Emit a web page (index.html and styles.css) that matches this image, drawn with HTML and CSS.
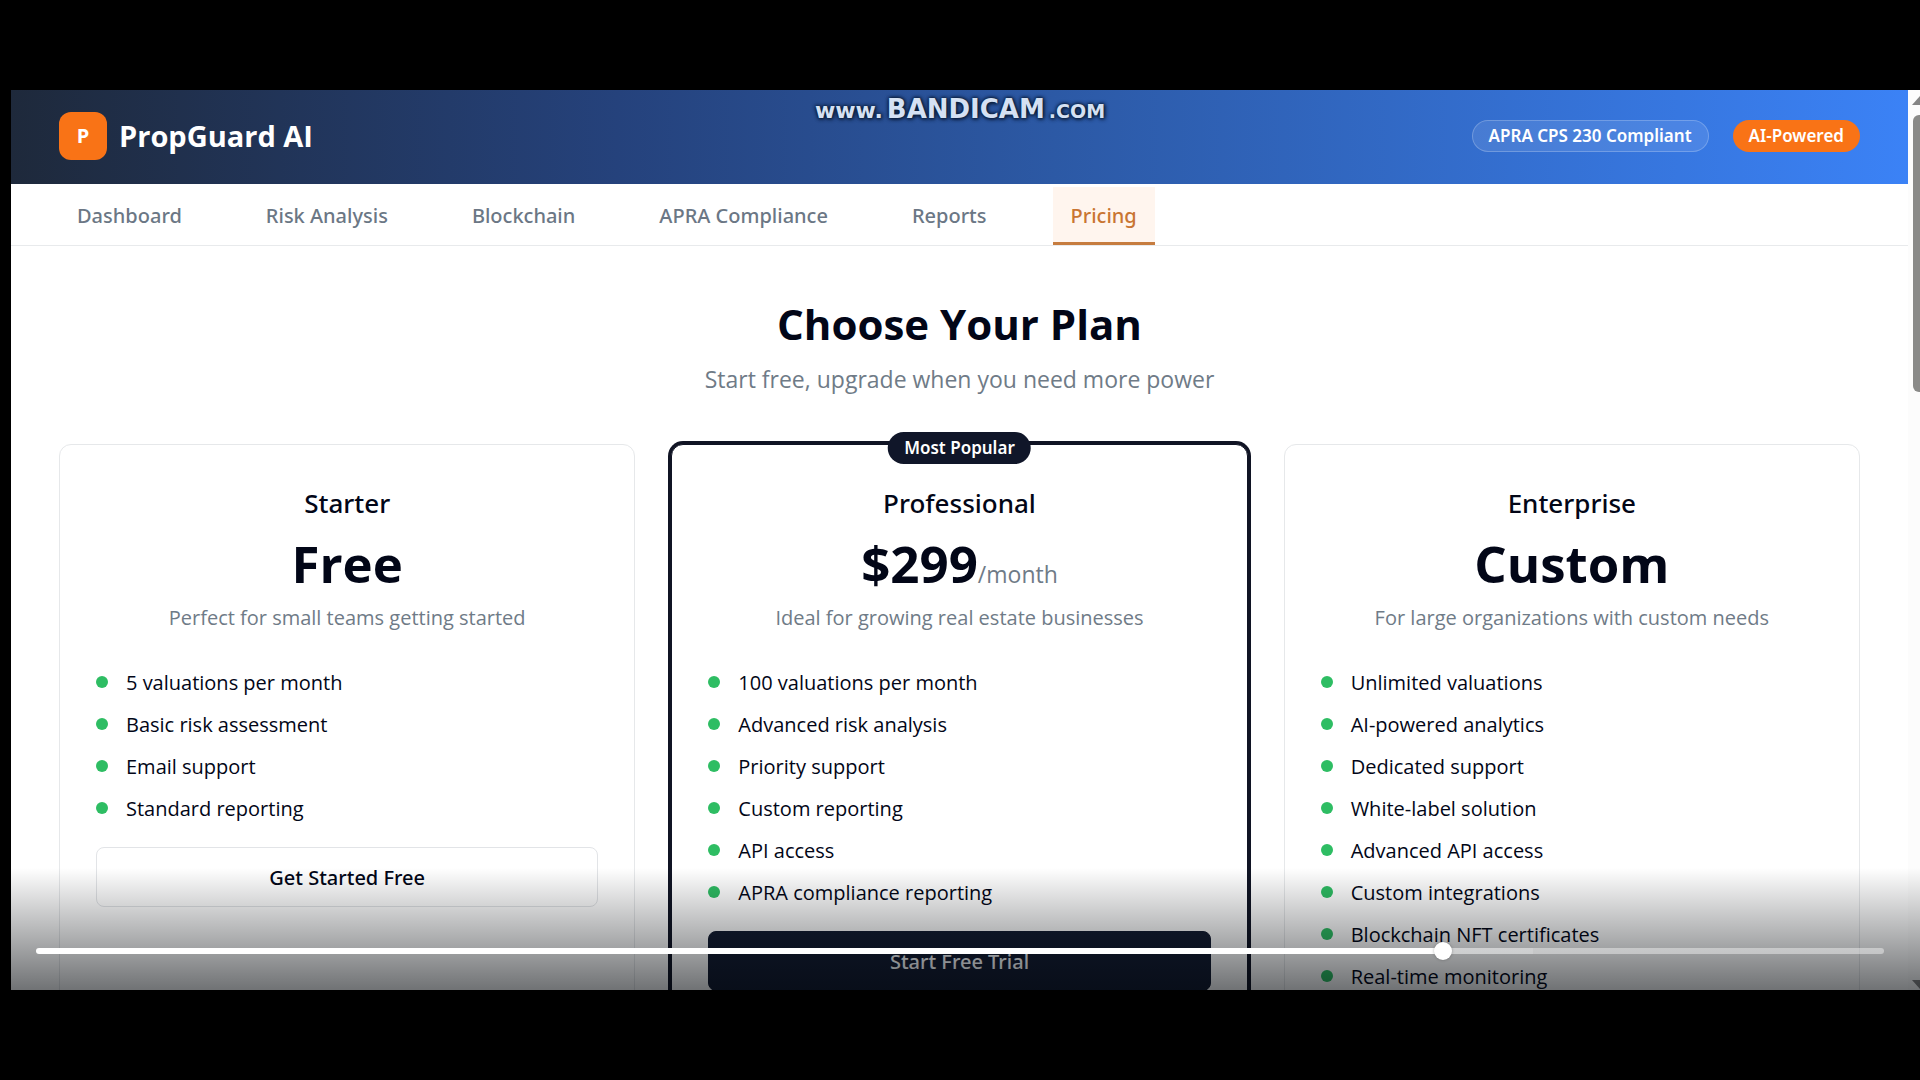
FILE: index.html
```html
<!DOCTYPE html>
<html lang="en">
<head>
<meta charset="utf-8">
<meta name="viewport" content="width=device-width, initial-scale=1">
<title>PropGuard AI – Pricing</title>
<link rel="stylesheet" href="styles.css">
</head>
<body>
<div class="player">
  <div class="page">
    <header class="header">
      <div class="brand">
        <span class="brand-mark">P</span>
        <span class="brand-name">PropGuard AI</span>
      </div>
      <div class="badges">
        <span class="pill pill-glass">APRA CPS 230 Compliant</span>
        <span class="pill pill-orange">AI-Powered</span>
      </div>
    </header>
    <nav class="tabs" aria-label="Main">
      <a class="tab" href="#dashboard">Dashboard</a>
      <a class="tab" href="#risk">Risk Analysis</a>
      <a class="tab" href="#blockchain">Blockchain</a>
      <a class="tab" href="#compliance">APRA Compliance</a>
      <a class="tab" href="#reports">Reports</a>
      <a class="tab tab-active" href="#pricing" aria-current="page">Pricing</a>
    </nav>
    <main class="main">
      <h1 class="title">Choose Your Plan</h1>
      <p class="subtitle">Start free, upgrade when you need more power</p>
      <div class="plans">
        <section class="card">
          <h2 class="plan-name">Starter</h2>
          <p class="price">Free</p>
          <p class="plan-desc">Perfect for small teams getting started</p>
          <ul class="features">
            <li>5 valuations per month</li>
            <li>Basic risk assessment</li>
            <li>Email support</li>
            <li>Standard reporting</li>
          </ul>
          <button class="btn btn-outline" type="button">Get Started Free</button>
        </section>
        <section class="card card-popular">
          <span class="pill popular-badge">Most Popular</span>
          <h2 class="plan-name">Professional</h2>
          <p class="price">$299<span class="period">/month</span></p>
          <p class="plan-desc">Ideal for growing real estate businesses</p>
          <ul class="features">
            <li>100 valuations per month</li>
            <li>Advanced risk analysis</li>
            <li>Priority support</li>
            <li>Custom reporting</li>
            <li>API access</li>
            <li>APRA compliance reporting</li>
          </ul>
          <button class="btn btn-dark" type="button">Start Free Trial</button>
        </section>
        <section class="card">
          <h2 class="plan-name">Enterprise</h2>
          <p class="price">Custom</p>
          <p class="plan-desc">For large organizations with custom needs</p>
          <ul class="features">
            <li>Unlimited valuations</li>
            <li>AI-powered analytics</li>
            <li>Dedicated support</li>
            <li>White-label solution</li>
            <li>Advanced API access</li>
            <li>Custom integrations</li>
            <li>Blockchain NFT certificates</li>
            <li>Real-time monitoring</li>
          </ul>
        </section>
      </div>
    </main>
  </div>
  <div class="scrollbar" aria-hidden="true">
    <svg class="arrow" width="18" height="10" viewBox="0 0 18 10"><path d="M0 10 9 0l9 10z" fill="#858585"/></svg>
    <span class="thumb"></span>
    <svg class="arrow arrow-down" width="18" height="10" viewBox="0 0 18 10"><path d="M0 0h18L9 10z" fill="#858585"/></svg>
  </div>
  <div class="watermark"><span class="wm-www">www.</span><span class="wm-name">BANDICAM</span><span class="wm-com">.COM</span></div>
  <div class="controls">
    <input class="seek" type="range" min="0" max="1000" value="764" aria-label="Seek">
  </div>
</div>
</body>
</html>
```
FILE: styles.css
```css
* { box-sizing: border-box; }

body {
  margin: 0;
  min-height: 100vh;
  padding: 90px 0;
  background: #000;
  color: #020617;
  font-family: "Open Sans", "Noto Sans", sans-serif;
  font-size: 20px;
  line-height: 30px;
}

h1, h2, p, ul { margin: 0; padding: 0; }

/* Video frame */
.player {
  position: relative;
  display: flex;
  height: calc(100vh - 180px);
  padding-left: 11px;
  overflow: hidden;
}

.page {
  flex: 1;
  min-width: 0;
  background: #fff;
  overflow: hidden;
}

/* Header */
.header {
  display: flex;
  align-items: center;
  justify-content: space-between;
  padding: 22px 48px 24px;
  background: linear-gradient(90deg, #1e293b 0%, #25427c 32%, #2c59a5 55%, #3b82f6 100%);
  color: #fff;
}

.brand { display: flex; align-items: center; gap: 12px; }

.brand-mark {
  display: grid;
  place-items: center;
  width: 48px;
  height: 48px;
  border-radius: 12px;
  background: #f97316;
  font-weight: 700;
}

.brand-name { font-size: 29px; line-height: 48px; font-weight: 700; }

.badges { display: flex; gap: 24px; }

.pill {
  padding: 0 16px;
  border-radius: 16px;
  font-family: "Noto Sans", sans-serif;
  font-size: 17px;
  line-height: 32px;
  font-weight: 600;
  color: #fff;
}

.pill-glass {
  line-height: 30px;
  border: 1px solid rgba(255, 255, 255, .22);
  background: rgba(255, 255, 255, .1);
}

.pill-orange { background: #f97316; }

/* Navigation */
.tabs {
  display: flex;
  gap: 48px;
  padding: 3px 48px 0;
  border-bottom: 1px solid #e8eaec;
}

.tab {
  padding: 14px 18px 11px;
  border-bottom: 3px solid transparent;
  color: #6b7785;
  font-family: "Noto Sans", sans-serif;
  font-weight: 500;
  text-decoration: none;
}

.tab-active {
  border-color: #c67c3f;
  background: #fff5ee;
  color: #c97532;
}

/* Pricing */
.main { padding: 50px 48px; text-align: center; }

.title { font-size: 42px; line-height: 56px; font-weight: 700; }

.subtitle {
  margin: 10px 0 48px;
  color: #6f7b87;
  font-size: 23px;
  line-height: 34px;
}

.plans { display: grid; grid-template-columns: repeat(3, 1fr); gap: 36px; }

.card {
  position: relative;
  padding: 40px 36px 36px;
  border: 1px solid #e6e8ea;
  border-radius: 12px;
  background: #fff;
}

.card-popular { border-color: #101424; box-shadow: 0 0 0 3px #101424; }

.popular-badge {
  position: absolute;
  top: -13px;
  left: 50%;
  transform: translateX(-50%);
  background: #101629;
  white-space: nowrap;
}

.plan-name {
  font-family: "Noto Sans", sans-serif;
  font-size: 26px;
  line-height: 36px;
  font-weight: 500;
}

.price { margin-top: 10px; font-size: 51px; line-height: 64px; font-weight: 700; }

.period { color: #6f7b87; font-size: 23px; line-height: 30px; font-weight: 400; }

.plan-desc { margin-top: 8px; color: #6f7b87; }

.features {
  display: grid;
  gap: 10px;
  margin-top: 34px;
  list-style: none;
  line-height: 32px;
  text-align: left;
}

.features li { display: flex; align-items: flex-start; gap: 18px; }

.features li::before {
  content: "";
  width: 12px;
  height: 12px;
  margin-top: 9px;
  border-radius: 50%;
  background: #2ebd63;
}

.btn {
  width: 100%;
  height: 60px;
  margin-top: 22px;
  border: 1px solid #e2e4e7;
  border-radius: 8px;
  font-family: "Noto Sans", sans-serif;
  font-size: 20px;
  font-weight: 500;
}

.btn-outline { background: #fff; color: #020617; }
.btn-dark { border-color: #131b30; background: #131b30; color: #f8fafc; }

/* Browser scrollbar at the right edge of the frame */
.scrollbar {
  display: flex;
  flex-direction: column;
  width: 12px;
  padding: 5px 0 0 4px;
  background: #fcfcfc;
  overflow: hidden;
}

.arrow { flex: none; }
.arrow-down { margin-top: auto; }

.thumb {
  width: 14px;
  height: 31%;
  margin: 10px 0 0 1px;
  border-radius: 6px;
  background: #8a8a88;
}

/* Layers over the frame */
.watermark {
  position: absolute;
  top: 3px;
  left: 50%;
  display: flex;
  align-items: baseline;
  gap: 4px;
  transform: translateX(-50%);
  color: #d5e1f3;
  font-family: "DejaVu Sans", sans-serif;
  font-weight: 700;
  line-height: 32px;
  white-space: nowrap;
  text-shadow: 0 0 3px #0b1c38, 0 0 4px #0b1c38, 1px 1px 4px #0b1c38;
}

.wm-www { font-size: 22px; }
.wm-name { font-size: 26px; }
.wm-com { font-size: 19px; }

.controls {
  position: absolute;
  inset: auto 0 0 11px;
  display: flex;
  height: 122px;
  padding: 74px 36px 30px 25px;
  background: linear-gradient(rgba(0, 4, 8, 0), rgba(0, 4, 8, .56));
}

.seek {
  appearance: none;
  width: 100%;
  height: 18px;
  margin: 0;
  background: none;
}

.seek::-webkit-slider-runnable-track {
  height: 6px;
  border-radius: 3px;
  background: linear-gradient(90deg, #fff 76%, rgba(255, 255, 255, .5) 76% 81%, rgba(255, 255, 255, .42) 81%);
}

.seek::-webkit-slider-thumb {
  appearance: none;
  width: 18px;
  height: 18px;
  margin-top: -6px;
  border-radius: 50%;
  background: #fff;
  box-shadow: 0 0 3px rgba(0, 0, 0, .3);
}
```
